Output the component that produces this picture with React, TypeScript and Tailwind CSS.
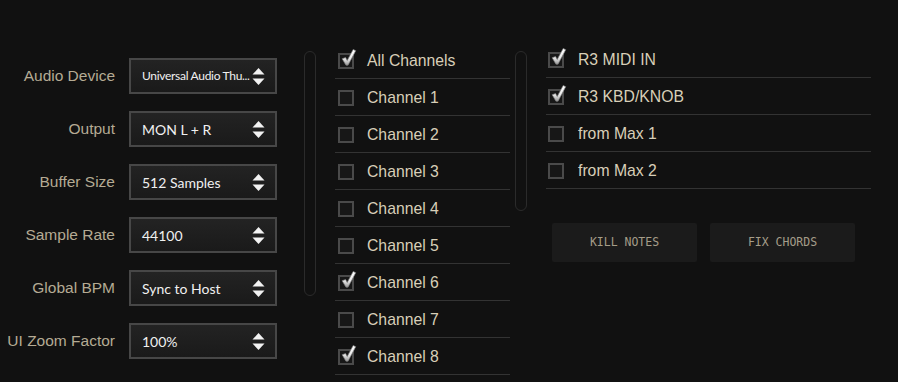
import React, { useState } from "react";

const settings = [
  { label: "Audio Device", value: "Universal Audio Thu...", small: true },
  { label: "Output", value: "MON L + R" },
  { label: "Buffer Size", value: "512 Samples" },
  { label: "Sample Rate", value: "44100" },
  { label: "Global BPM", value: "Sync to Host" },
  { label: "UI Zoom Factor", value: "100%" },
];

const channels = [
  { name: "All Channels", on: true },
  { name: "Channel 1", on: false },
  { name: "Channel 2", on: false },
  { name: "Channel 3", on: false },
  { name: "Channel 4", on: false },
  { name: "Channel 5", on: false },
  { name: "Channel 6", on: true },
  { name: "Channel 7", on: false },
  { name: "Channel 8", on: true },
];

const inputs = [
  { name: "R3 MIDI IN", on: true },
  { name: "R3 KBD/KNOB", on: true },
  { name: "from Max 1", on: false },
  { name: "from Max 2", on: false },
];

function Arrows() {
  return (
    <svg width="13" height="17" viewBox="0 0 13 17" className="shrink-0">
      <path d="M6.5 0 L12.5 6.5 L0.5 6.5 Z" fill="#f2f2f2" />
      <path d="M6.5 17 L12.5 10.5 L0.5 10.5 Z" fill="#f2f2f2" />
    </svg>
  );
}

function Checkbox({ checked, onClick }: { checked: boolean; onClick: () => void }) {
  return (
    <button
      onClick={onClick}
      className="relative w-[16px] h-[16px] border-2 border-[#4a4a4a] bg-[#171717] shrink-0"
    >
      {checked && (
        <svg
          width="17"
          height="19"
          viewBox="0 0 20 22"
          className="absolute left-[0px] top-[-7px]"
        >
          <defs>
            <linearGradient id="chk" x1="0" y1="0" x2="0" y2="1">
              <stop offset="0" stopColor="#ffffff" />
              <stop offset="0.6" stopColor="#e8e8e8" />
              <stop offset="1" stopColor="#9a9a9a" />
            </linearGradient>
          </defs>
          <path
            d="M2.5 12.5 L6.5 11 L8.5 14.5 L15.5 1.5 L18.5 3 L9.5 20 L7 20 Z"
            fill="url(#chk)"
            stroke="#7a7a7a"
            strokeWidth="0.8"
          />
        </svg>
      )}
    </button>
  );
}

function CheckList({
  items,
  width,
  boxPad,
  textGap,
}: {
  items: { name: string; on: boolean }[];
  width: string;
  boxPad: string;
  textGap: string;
}) {
  const [state, setState] = useState(items.map((i) => i.on));
  return (
    <div className={width}>
      {items.map((item, i) => (
        <div
          key={item.name}
          className={`h-[37px] pt-[2px] flex items-center border-b border-[#333] ${boxPad} ${textGap}`}
        >
          <Checkbox
            checked={state[i]}
            onClick={() => setState(state.map((s, j) => (j === i ? !s : s)))}
          />
          <span className="text-[15.75px] text-[#d8cfb8] font-['Liberation_Sans',Arial,sans-serif]">
            {item.name}
          </span>
        </div>
      ))}
    </div>
  );
}

export default function App() {
  return (
    <div className="w-[898px] h-[382px] bg-[#111111] flex overflow-hidden">
      {/* settings */}
      <div className="pt-[58px] flex flex-col gap-[17px]">
        {settings.map((s) => (
          <div key={s.label} className="flex items-center gap-[14px]">
            <span className="w-[115px] text-right text-[15.5px] text-[#b5ab94] font-['Liberation_Sans',Arial,sans-serif] whitespace-nowrap">
              {s.label}
            </span>
            <div className="w-[148px] h-[36px] border-2 border-[#474747] bg-gradient-to-b from-[#232323] to-[#1a1a1a] flex items-center justify-between pl-[11px] pr-[10px]">
              <span
                className={`${
                  s.small ? "text-[12px] tracking-[-0.3px]" : "text-[14px]"
                } text-[#f0f0f0] font-['Lato',sans-serif] whitespace-nowrap`}
              >
                {s.value}
              </span>
              <Arrows />
            </div>
          </div>
        ))}
      </div>

      {/* channels */}
      <div className="ml-[27px] mt-[51px] w-[12px] h-[245px] rounded-full border border-[#2b2b2b]" />
      <div className="ml-[19px] mt-[42px]">
        <CheckList items={channels} width="w-[175px]" boxPad="pl-[3px]" textGap="gap-[13px]" />
      </div>

      {/* inputs */}
      <div className="ml-[5px] mt-[51px] w-[12px] h-[160px] rounded-full border border-[#2b2b2b]" />
      <div className="ml-[19px] mt-[41px] flex flex-col">
        <CheckList items={inputs} width="w-[325px]" boxPad="pl-[2px]" textGap="gap-[14px]" />
        <div className="mt-[34px] ml-[6px] flex gap-[13px]">
          {["KILL NOTES", "FIX CHORDS"].map((b) => (
            <button
              key={b}
              className="w-[145px] h-[39px] rounded-[2px] bg-[#1b1b1b] text-[11.5px] text-[#a59d89] font-['DejaVu_Sans_Mono',monospace]"
            >
              {b}
            </button>
          ))}
        </div>
      </div>
    </div>
  );
}
